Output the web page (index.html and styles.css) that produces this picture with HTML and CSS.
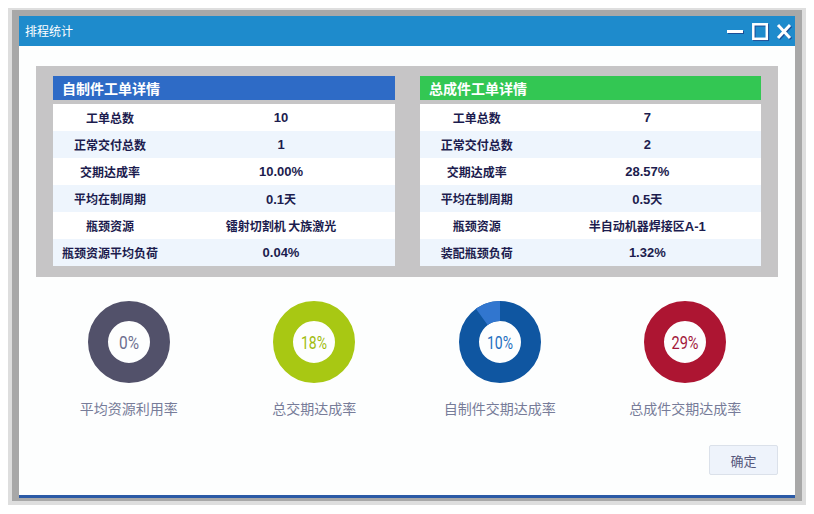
FILE: index.html
```html
<!DOCTYPE html>
<html lang="zh">
<head>
<meta charset="utf-8">
<title>排程统计</title>
<link rel="stylesheet" href="styles.css">
</head>
<body>
<div class="shadow">
  <div class="window">
    <div class="titlebar">
      <span class="title">排程统计</span>
      <svg class="controls" width="76" height="30" viewBox="0 0 76 30">
        <g fill="none" stroke="#1b4d96">
          <line x1="9" y1="16.5" x2="25" y2="16.5" stroke-width="3"/>
          <rect x="35.3" y="9.3" width="13.5" height="14.5" stroke-width="2.5"/>
          <line x1="60" y1="10" x2="72" y2="23" stroke-width="3"/>
          <line x1="72" y1="10" x2="60" y2="23" stroke-width="3"/>
        </g>
        <g fill="none" stroke="#ffffff">
          <line x1="8" y1="15.5" x2="24" y2="15.5" stroke-width="3"/>
          <rect x="34.3" y="8.3" width="13.5" height="14.5" stroke-width="2.5"/>
          <line x1="59" y1="9" x2="71" y2="22" stroke-width="3"/>
          <line x1="71" y1="9" x2="59" y2="22" stroke-width="3"/>
        </g>
      </svg>
    </div>
    <div class="body">
      <div class="panel">
        <div class="card">
          <div class="card-head head-blue">自制件工单详情</div>
          <div class="rows">
            <div class="row"><span>工单总数</span><span class="num">10</span></div>
            <div class="row alt"><span>正常交付总数</span><span class="num">1</span></div>
            <div class="row"><span>交期达成率</span><span class="num">10.00%</span></div>
            <div class="row alt"><span>平均在制周期</span><span><span class="num">0.1</span>天</span></div>
            <div class="row"><span>瓶颈资源</span><span>镭射切割机 大族激光</span></div>
            <div class="row alt"><span>瓶颈资源平均负荷</span><span class="num">0.04%</span></div>
          </div>
        </div>
        <div class="card">
          <div class="card-head head-green">总成件工单详情</div>
          <div class="rows">
            <div class="row"><span>工单总数</span><span class="num">7</span></div>
            <div class="row alt"><span>正常交付总数</span><span class="num">2</span></div>
            <div class="row"><span>交期达成率</span><span class="num">28.57%</span></div>
            <div class="row alt"><span>平均在制周期</span><span><span class="num">0.5</span>天</span></div>
            <div class="row"><span>瓶颈资源</span><span>半自动机器焊接区<span class="num">A-1</span></span></div>
            <div class="row alt"><span>装配瓶颈负荷</span><span class="num">1.32%</span></div>
          </div>
        </div>
      </div>

      <div class="charts">
        <div class="chart">
          <svg class="donut" width="82" height="82" viewBox="0 0 82 82">
            <circle cx="41" cy="41" r="31" fill="none" stroke="#52516a" stroke-width="20"/>
            <text x="41" y="48" text-anchor="middle" class="pct" fill="#6d6f8f" textLength="20" lengthAdjust="spacingAndGlyphs">0%</text>
          </svg>
          <div class="chart-label">平均资源利用率</div>
        </div>
        <div class="chart">
          <svg class="donut" width="82" height="82" viewBox="0 0 82 82">
            <circle cx="41" cy="41" r="31" fill="none" stroke="#a8c813" stroke-width="20"/>
            <text x="41" y="48" text-anchor="middle" class="pct" fill="#9fbc0e" textLength="26" lengthAdjust="spacingAndGlyphs">18%</text>
          </svg>
          <div class="chart-label">总交期达成率</div>
        </div>
        <div class="chart">
          <svg class="donut" width="82" height="82" viewBox="0 0 82 82">
            <circle cx="41" cy="41" r="31" fill="none" stroke="#0f56a1" stroke-width="20"/>
            <circle cx="41" cy="41" r="31" fill="none" stroke="#3176cf" stroke-width="20" stroke-dasharray="19.48 200" transform="rotate(-126 41 41)"/>
            <text x="41" y="48" text-anchor="middle" class="pct" fill="#1f6fc0" textLength="26" lengthAdjust="spacingAndGlyphs">10%</text>
          </svg>
          <div class="chart-label">自制件交期达成率</div>
        </div>
        <div class="chart">
          <svg class="donut" width="82" height="82" viewBox="0 0 82 82">
            <circle cx="41" cy="41" r="31" fill="none" stroke="#ad1532" stroke-width="20"/>
            <text x="41" y="48" text-anchor="middle" class="pct" fill="#a2173a" textLength="27" lengthAdjust="spacingAndGlyphs">29%</text>
          </svg>
          <div class="chart-label">总成件交期达成率</div>
        </div>
      </div>

      <div class="footer">
        <button class="ok" type="button">确定</button>
      </div>
    </div>
    <div class="bottom-line"></div>
  </div>
</div>
</body>
</html>
```

FILE: styles.css
```css
html, body {
  margin: 0;
  padding: 0;
  background: #ffffff;
}

body {
  width: 814px;
  height: 514px;
  overflow: hidden;
  font-family: "Noto Sans CJK SC", "Liberation Sans", sans-serif;
}

.shadow {
  margin: 8px 0 0 8px;
  width: 790px;
  padding: 2px 4px 4px 4px;
  background: #dedede;
}

.window {
  border-style: solid;
  border-color: #a8a8a8;
  border-width: 6px 7px 3px 7px;
  background: #ffffff;
  display: flex;
  flex-direction: column;
}

.titlebar {
  height: 30px;
  background: #1e8bcc;
  display: flex;
  align-items: center;
  justify-content: space-between;
}

.title {
  padding-left: 6px;
  color: #ffffff;
  font-size: 12px;
  line-height: 30px;
}

.controls {
  display: block;
}

.body {
  height: 449px;
  background: #fdfefe;
  padding: 20px 17px 0 17px;
  box-sizing: border-box;
  display: flex;
  flex-direction: column;
}

.panel {
  height: 211px;
  box-sizing: border-box;
  background: #c6c5c6;
  padding: 10px 17px 0 17px;
  display: grid;
  grid-template-columns: 342px 341px;
  column-gap: 25px;
  align-items: start;
}

.card-head {
  height: 24px;
  line-height: 24px;
  padding-left: 9px;
  color: #ffffff;
  font-size: 14px;
  font-weight: bold;
}

.head-blue {
  background: #2e6bc6;
}

.head-green {
  background: #33c753;
}

.rows {
  margin-top: 4px;
  background: #ffffff;
}

.row {
  height: 27px;
  display: grid;
  grid-template-columns: 1fr 2fr;
  align-items: center;
  text-align: center;
  font-family: "Noto Sans CJK SC", "Liberation Sans", sans-serif;
  font-size: 12px;
  font-weight: bold;
  color: #1c1c4e;
  background: #ffffff;
}

.row .num {
  font-family: "Liberation Sans", sans-serif;
  font-size: 13px;
}

.row.alt {
  background: #eef5fd;
}

.charts {
  margin-top: 24px;
  display: grid;
  grid-template-columns: repeat(4, 1fr);
}

.chart {
  display: flex;
  flex-direction: column;
  align-items: center;
}

.donut {
  display: block;
}

.pct {
  font-family: "Roboto", "Liberation Sans", sans-serif;
  font-size: 19px;
  font-weight: 400;
}

.chart-label {
  margin-top: 15px;
  line-height: 20px;
  font-size: 14px;
  color: #777c99;
}

.footer {
  margin-top: 27px;
  display: flex;
  justify-content: flex-end;
}

.ok {
  width: 69px;
  height: 30px;
  margin: 0;
  padding: 0;
  background: #eef3fb;
  border: 1px solid #dbe1ea;
  border-radius: 2px;
  font-family: "Noto Sans CJK SC", sans-serif;
  font-size: 13px;
  color: #55577c;
}

.bottom-line {
  height: 3px;
  background: #2b5aa6;
}
```
